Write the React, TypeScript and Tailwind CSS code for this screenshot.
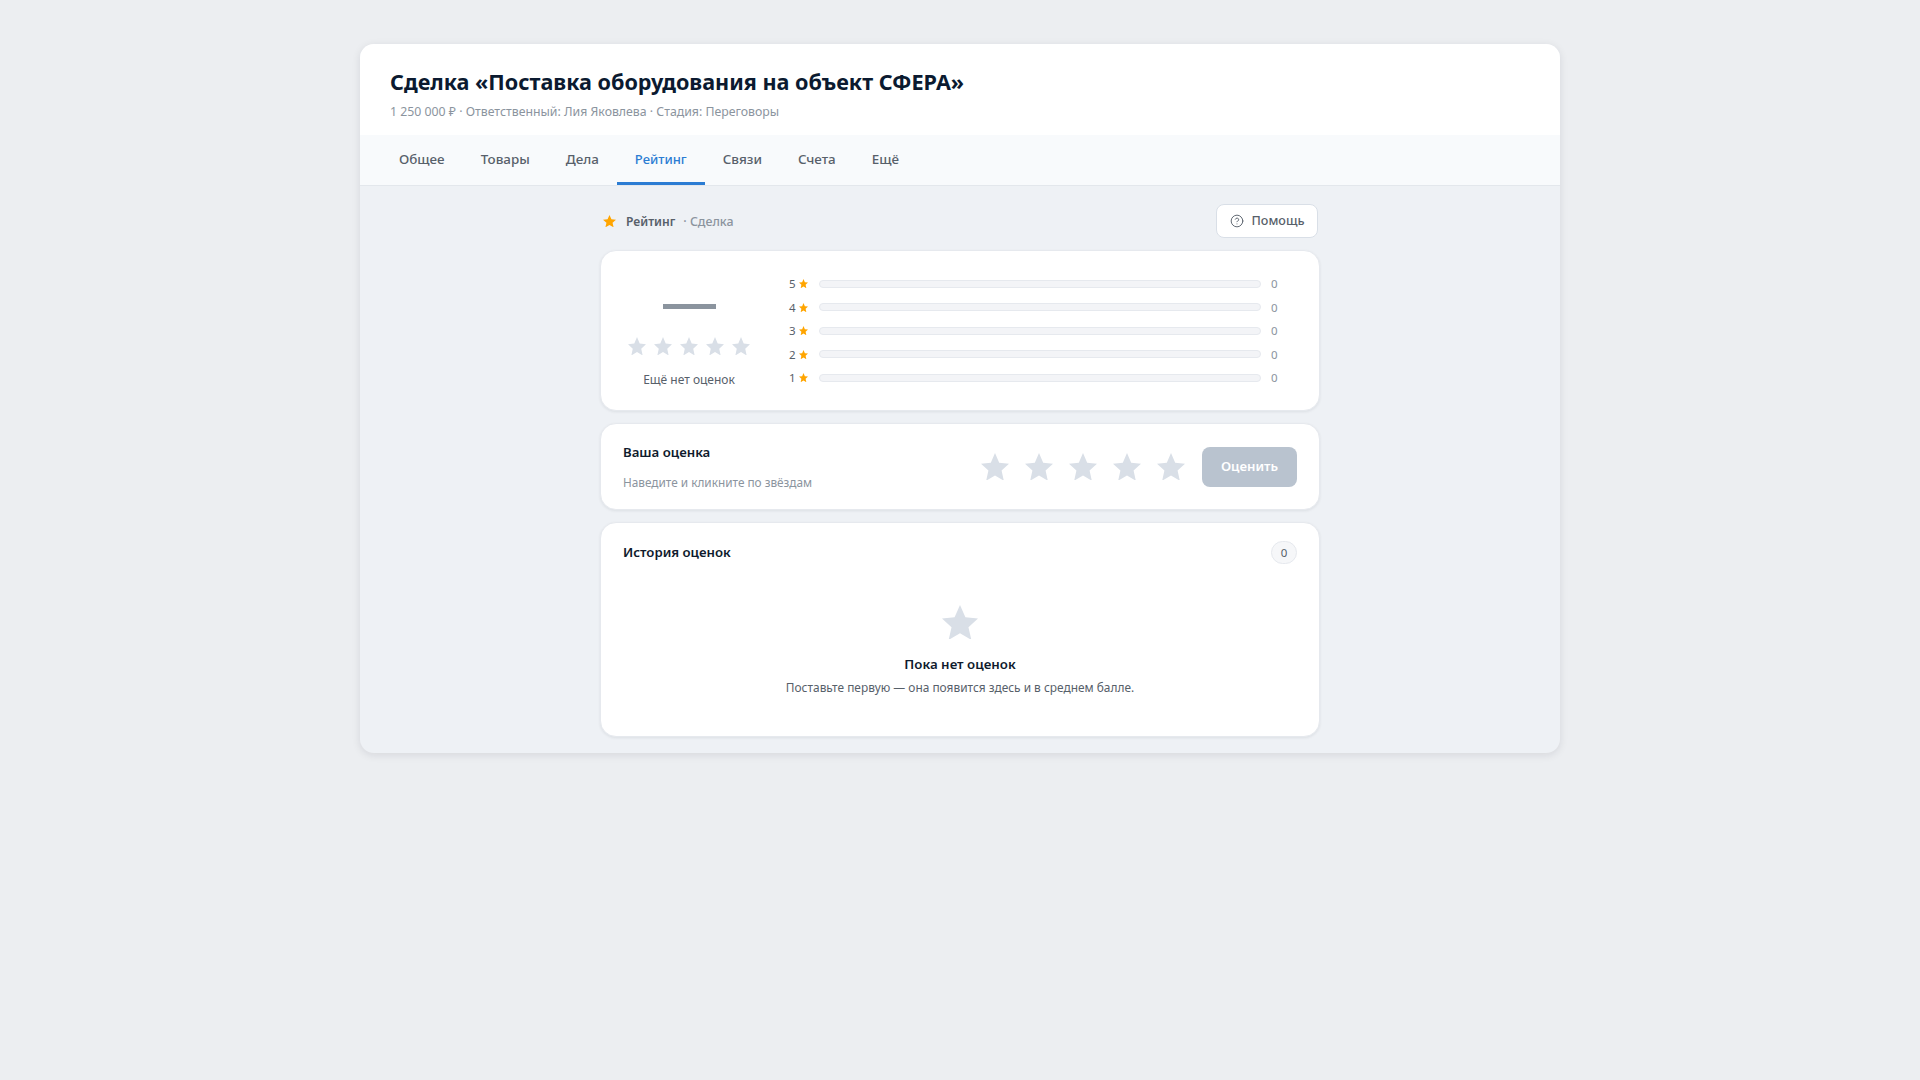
import { CircleHelp } from "lucide-react";

const tabs = ["Общее", "Товары", "Дела", "Рейтинг", "Связи", "Счета", "Ещё"];
const bars = [5, 4, 3, 2, 1];
const starPath = "M12 2l3 6.9 7 .7-5.3 4.8 1.6 7.1-6.3-3.7-6.3 3.7 1.6-7.1L2 9.6l7-.7z";

function Star({ className }: { className: string }) {
  return (
    <svg viewBox="2 2 20 19" preserveAspectRatio="none" className={className} fill="currentColor">
      <path d={starPath} />
    </svg>
  );
}

function Card({ className, children }: { className: string; children: React.ReactNode }) {
  return (
    <div className={`bg-white border border-[#e6e9ee] rounded-[16px] shadow-[0_1px_3px_rgba(16,24,40,0.08)] ${className}`}>
      {children}
    </div>
  );
}

function Summary() {
  return (
    <Card className="h-[161px] flex">
      <div className="w-[176px] flex flex-col items-center">
        <div className="mt-[53px] w-[53px] h-[5px] bg-[#8b949e]" />
        <div className="mt-[28px] flex gap-[8px] text-[#d9dfe7]">
          {bars.map(n => (
            <Star key={n} className="w-[18px] h-[18px]" />
          ))}
        </div>
        <div className="mt-[16px] text-[12px] leading-[18px] text-[#57606a]">Ещё нет оценок</div>
      </div>
      <div className="ml-[12px] mt-[21px] flex flex-col">
        {bars.map(n => (
          <div key={n} className="h-[23.5px] flex items-center text-[11.5px]">
            <span className="w-[7px] text-[#57606a]">{n}</span>
            <Star className="ml-[3px] w-[9px] h-[9px] text-[#ffa500]" />
            <div className="ml-[11px] w-[442px] h-[8px] rounded-full bg-[#f3f4f7] border border-[#e6e9ee]" />
            <span className="ml-[10px] text-[#8b949e]">0</span>
          </div>
        ))}
      </div>
    </Card>
  );
}

function YourRating() {
  return (
    <Card className="h-[87px] flex items-center px-[22px]">
      <div className="flex-1">
        <div className="text-[13.2px] leading-[20px] font-semibold text-[#0f1b2d]">Ваша оценка</div>
        <div className="mt-[11px] text-[11.8px] leading-[18px] text-[#8b949e]">Наведите и кликните по звёздам</div>
      </div>
      <div className="flex gap-[16px] text-[#d9dfe7]">
        {bars.map(n => (
          <Star key={n} className="w-[28px] h-[27px]" />
        ))}
      </div>
      <button className="ml-[17px] w-[95px] h-[40px] rounded-[8px] bg-[#b9c3cf] text-white text-[13.2px] font-semibold">
        Оценить
      </button>
    </Card>
  );
}

function History() {
  return (
    <Card className="h-[215px] px-[22px] pt-[18px]">
      <div className="flex items-center justify-between">
        <div className="pb-[2px] text-[13.2px] leading-[20px] font-semibold text-[#0f1b2d]">История оценок</div>
        <div className="w-[26px] h-[23px] rounded-full bg-[#f6f7f9] border border-[#e6e9ee] flex items-center justify-center text-[11.5px] text-[#57606a]">
          0
        </div>
      </div>
      <div className="mt-[41px] flex flex-col items-center">
        <Star className="w-[36px] h-[34px] text-[#d9dfe7]" />
        <div className="mt-[15px] text-[13.3px] leading-[20px] font-semibold text-[#0f1b2d]">Пока нет оценок</div>
        <div className="mt-[4px] text-[11.9px] leading-[18px] text-[#57606a]">
          Поставьте первую — она появится здесь и в среднем балле.
        </div>
      </div>
    </Card>
  );
}

export default function App() {
  return (
    <div className="min-h-[1080px] bg-[#eceef1] pt-[44px] font-['Noto_Sans',sans-serif]">
      <div className="w-[1200px] mx-auto h-[709px] rounded-[14px] overflow-hidden bg-[#eef1f5] shadow-[0_2px_8px_rgba(16,24,40,0.1)]">
        <div className="h-[91px] bg-white px-[30px] pt-[22px]">
          <h1 className="text-[21.6px] leading-[32px] font-bold text-[#0b1a30]">
            Сделка «Поставка оборудования на объект СФЕРА»
          </h1>
          <div className="mt-[5px] text-[12.3px] leading-[18px] text-[#8b949e]">
            1 250 000 ₽ · Ответственный: Лия Яковлева · Стадия: Переговоры
          </div>
        </div>
        <div className="h-[51px] bg-[#f8fafc] border-b border-[#e3e7ec] flex px-[21px]">
          {tabs.map(tab => (
            <div
              key={tab}
              className={`h-[50px] px-[18px] pt-[2px] flex items-center font-medium border-b-[3px] ${
                tab === "Рейтинг"
                  ? "text-[13px] text-[#2b7cd3] border-[#2b7cd3]"
                  : "text-[13.4px] text-[#57606a] border-transparent"
              }`}
            >
              {tab}
            </div>
          ))}
        </div>
        <div className="w-[720px] mx-auto">
          <div className="h-[64px] flex items-center justify-between pl-[3px] pr-[2px] pt-[6px]">
            <div className="flex items-center pt-[1px]">
              <Star className="w-[13px] h-[12px] text-[#ffa500]" />
              <span className="ml-[10px] pt-[1px] text-[12.1px] font-semibold text-[#57606a]">Рейтинг</span>
              <span className="ml-[8px] pt-[1px] text-[12.4px] font-medium text-[#8b949e]">· Сделка</span>
            </div>
            <button className="w-[102px] h-[34px] rounded-[8px] bg-white border border-[#d9dfe7] flex items-center justify-center gap-[8px] text-[12.6px] font-medium text-[#57606a]">
              <CircleHelp className="w-[14px] h-[14px]" strokeWidth={1.6} />
              Помощь
            </button>
          </div>
          <div className="flex flex-col gap-[12px]">
            <Summary />
            <YourRating />
            <History />
          </div>
        </div>
      </div>
    </div>
  );
}
